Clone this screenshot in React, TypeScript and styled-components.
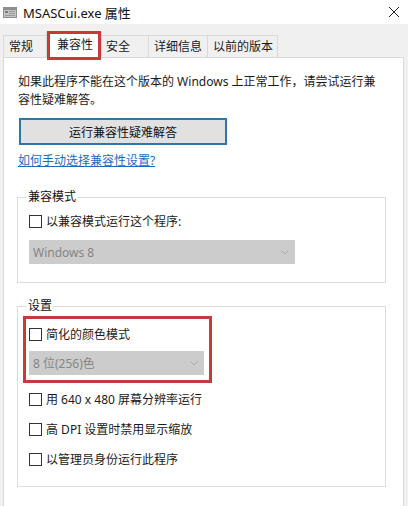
import styled, { createGlobalStyle } from "styled-components";

const TABS = ["常规", "兼容性", "安全", "详细信息", "以前的版本"];
const TAB_WIDTHS = [46, 56, 49, 60, 71];
const ACTIVE_TAB = 1;

const GlobalStyle = createGlobalStyle`
  html, body {
    margin: 0;
    padding: 0;
    background: #f0f0f0;
  }
  body {
    font-family: "Noto Sans", "Noto Sans CJK SC", sans-serif;
    font-size: 12px;
    color: #1a1a1a;
  }
`;

const Checkbox = () => <Box />;

const Combo = ({ value }: { value: string }) => (
  <Select>
    <span>{value}</span>
    <svg width="8" height="5" viewBox="0 0 8 5">
      <path d="M0.5 0.5 L4 4 L7.5 0.5" fill="none" stroke="#a9a9a9" strokeWidth="1" />
    </svg>
  </Select>
);

const App = () => {
  return (
    <Window>
      <GlobalStyle />
      <TitleBar>
        <svg width="14" height="11" viewBox="0 0 14 11">
          <rect x="0" y="0" width="14" height="11" fill="#8e8e8e" />
          <rect x="1" y="3" width="12" height="7" fill="#c4c4c4" />
          <rect x="2" y="4" width="3" height="2" fill="#7a7a7a" />
          <rect x="6" y="4" width="6" height="1" fill="#9a9a9a" />
          <rect x="6" y="6" width="6" height="1" fill="#9a9a9a" />
          <rect x="2" y="8" width="10" height="1" fill="#9a9a9a" />
        </svg>
        <Title>MSASCui.exe 属性</Title>
        <Close>
          <svg width="10" height="10" viewBox="0 0 10 10">
            <path d="M0 0 L10 10 M10 0 L0 10" stroke="#222" strokeWidth="1" />
          </svg>
        </Close>
      </TitleBar>
      <Body>
        <TabStrip>
          {TABS.map((t, i) => (
            <Tab key={t} $active={i === ACTIVE_TAB} $width={TAB_WIDTHS[i]}>
              {t}
            </Tab>
          ))}
        </TabStrip>
        <Panel>
          <Intro>如果此程序不能在这个版本的 Windows 上正常工作，请尝试运行兼容性疑难解答。</Intro>
          <Button>运行兼容性疑难解答</Button>
          <HelpLink>如何手动选择兼容性设置?</HelpLink>

          <Group>
            <Legend>兼容模式</Legend>
            <CheckRow $top={6}>
              <Checkbox />
              <span>以兼容模式运行这个程序:</span>
            </CheckRow>
            <ComboWrap $top={10} $width={266}>
              <Combo value="Windows 8" />
            </ComboWrap>
          </Group>

          <Group>
            <Legend>设置</Legend>
            <Highlight>
              <CheckRow>
                <Checkbox />
                <span>简化的颜色模式</span>
              </CheckRow>
              <ComboWrap $top={8} $width={175}>
                <Combo value="8 位(256)色" />
              </ComboWrap>
            </Highlight>
            <Options>
              <CheckRow>
                <Checkbox />
                <span>用 640 x 480 屏幕分辨率运行</span>
              </CheckRow>
              <CheckRow>
                <Checkbox />
                <span>高 DPI 设置时禁用显示缩放</span>
              </CheckRow>
              <CheckRow>
                <Checkbox />
                <span>以管理员身份运行此程序</span>
              </CheckRow>
            </Options>
          </Group>
        </Panel>
      </Body>
    </Window>
  );
};

export default App;

const Window = styled.div`
  width: 408px;
  height: 506px;
  overflow: hidden;
  display: flex;
  flex-direction: column;
  background: #f0f0f0;
`;

const TitleBar = styled.div`
  height: 24px;
  flex-shrink: 0;
  background: #fff;
  display: flex;
  align-items: center;
  padding: 0 9px 0 3px;

  & > svg {
    margin-top: 1px;
  }
`;

const Title = styled.div`
  margin-left: 6px;
  font-size: 13px;
  color: #111;
  flex: 1;
`;

const Close = styled.div`
  display: flex;
  align-items: center;
`;

const Body = styled.div`
  flex-shrink: 0;
  display: flex;
  flex-direction: column;
  padding: 0 4px 0 3px;
`;

const TabStrip = styled.div`
  height: 33px;
  flex-shrink: 0;
  display: flex;
  align-items: flex-end;
`;

const Tab = styled.div<{ $active: boolean; $width: number }>`
  position: relative;
  box-sizing: border-box;
  width: ${(p) => p.$width}px;
  height: ${(p) => (p.$active ? 26 : 22)}px;
  line-height: ${(p) => (p.$active ? 24 : 22)}px;
  padding-left: ${(p) => (p.$active ? 10 : 5)}px;
  margin: 0 ${(p) => (p.$active ? -2 : -1)}px ${(p) => (p.$active ? -1 : 0)}px
    ${(p) => (p.$active ? -2 : 0)}px;
  z-index: ${(p) => (p.$active ? 2 : 1)};
  background: ${(p) => (p.$active ? "#fff" : "#f0f0f0")};
  border: 1px solid #d9d9d9;
  border-bottom: none;
  white-space: nowrap;

  ${(p) =>
    p.$active &&
    `
    &::after {
      content: "";
      position: absolute;
      top: -2px;
      bottom: -2px;
      left: 0px;
      right: 0px;
      border: 3px solid #c9393c;
    }
  `}
`;

const Panel = styled.div`
  height: 500px;
  background: #fff;
  border: 1px solid #d9d9d9;
  padding: 15px 17px 0 14px;
`;

const Intro = styled.p`
  margin: 0;
  line-height: 18px;
`;

const Button = styled.div`
  box-sizing: border-box;
  width: 208px;
  height: 27px;
  margin: 9px 0 0 1px;
  border: 2px solid #2f77a6;
  background: #e1e1e1;
  display: flex;
  align-items: center;
  justify-content: center;
  color: #111;
`;

const HelpLink = styled.a`
  display: inline-block;
  margin-top: 7px;
  line-height: 18px;
  color: #1c6bc0;
  text-decoration: underline;
`;

const Group = styled.fieldset`
  margin: 18px 0 0 -1px;
  padding: 0 10px 18px 11px;
  border: 1px solid #dcdcdc;
  min-width: 0;

  & + & {
    margin-top: 14px;
  }
`;

const Legend = styled.legend`
  padding: 0 1px;
  margin-left: -2px;
  line-height: 18px;
  color: #111;
`;

const CheckRow = styled.div<{ $top?: number }>`
  display: flex;
  align-items: center;
  gap: 4px;
  height: 18px;
  margin-top: ${(p) => p.$top ?? 0}px;
  white-space: nowrap;
`;

const Box = styled.span`
  box-sizing: border-box;
  width: 13px;
  height: 13px;
  border: 1px solid #333;
  background: #fff;
  flex-shrink: 0;
`;

const ComboWrap = styled.div<{ $top: number; $width: number }>`
  margin-top: ${(p) => p.$top}px;
  width: ${(p) => p.$width}px;
`;

const Select = styled.div`
  box-sizing: border-box;
  height: 24px;
  background: #cccccc;
  color: #858585;
  display: flex;
  align-items: center;
  justify-content: space-between;
  padding: 0 6px 0 4px;
`;

const Highlight = styled.div`
  margin: 1px 0 0 -6px;
  width: 189px;
  box-sizing: border-box;
  border: 3px solid #c9393c;
  padding: 6px 5px 5px 3px;
`;

const Options = styled.div`
  display: flex;
  flex-direction: column;
  gap: 12px;
  margin-top: 7px;
`;
